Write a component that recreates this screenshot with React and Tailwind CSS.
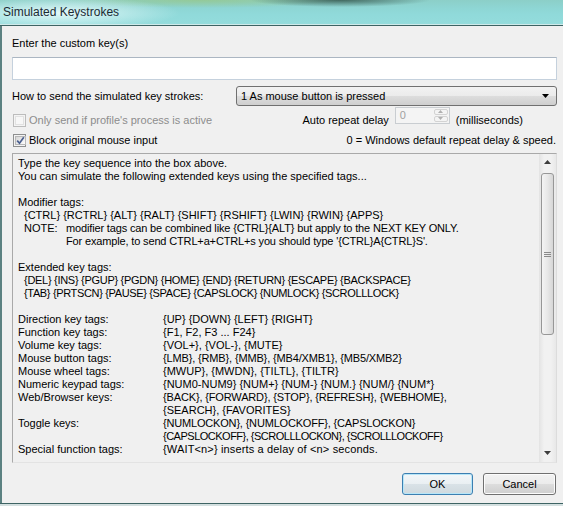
import React from "react";

const Check = ({ checked, disabled }) => (
  <span
    className={`w-[13px] h-[13px] shrink-0 border p-px flex ${
      disabled ? "border-[#bcbcbc] bg-[#f4f4f4]" : "border-[#8e8f8f] bg-[#f4f4f4]"
    }`}
  >
    <span
      className={`flex-1 flex items-center justify-center border ${
        disabled
          ? "border-[#e1e1e1] bg-[#f7f7f7]"
          : "border-[#b8b8b8] bg-[linear-gradient(135deg,#d6d6d6,#fdfdfd)]"
      }`}
    >
      {checked && (
        <svg width="9" height="9" viewBox="0 0 9 9" className="-mt-px">
          <path d="M1.2 4.6 L3.5 7.2 L7.8 1.2" stroke="#4a5f8f" strokeWidth="1.7" fill="none" />
        </svg>
      )}
    </span>
  </span>
);

const Triangle = ({ dir = "down", color = "#000", w = 7 }) => (
  <svg width={w} height={Math.ceil(w / 2) + 1} viewBox={`0 0 ${w} ${Math.ceil(w / 2) + 1}`}>
    {dir === "down" ? (
      <path d={`M0 0 L${w} 0 L${w / 2} ${Math.ceil(w / 2)} Z`} fill={color} />
    ) : (
      <path d={`M${w / 2} 0 L${w} ${Math.ceil(w / 2)} L0 ${Math.ceil(w / 2)} Z`} fill={color} />
    )}
  </svg>
);

// [label, value, tracking class for the value]
const tagRows = [
  ["Direction key tags:", "{UP} {DOWN} {LEFT} {RIGHT}", ""],
  ["Function key tags:", "{F1, F2, F3 ... F24}", ""],
  ["Volume key tags:", "{VOL+}, {VOL-}, {MUTE}", ""],
  ["Mouse button tags:", "{LMB}, {RMB}, {MMB}, {MB4/XMB1}, {MB5/XMB2}", "tracking-[-0.15px]"],
  ["Mouse wheel tags:", "{MWUP}, {MWDN}, {TILTL}, {TILTR}", ""],
  ["Numeric keypad tags:", "{NUM0-NUM9} {NUM+} {NUM-} {NUM.} {NUM/} {NUM*}", ""],
  ["Web/Browser keys:", "{BACK}, {FORWARD}, {STOP}, {REFRESH}, {WEBHOME},", "tracking-[-0.15px]"],
  ["", "{SEARCH}, {FAVORITES}", ""],
  ["Toggle keys:", "{NUMLOCKON}, {NUMLOCKOFF}, {CAPSLOCKON}", "tracking-[-0.18px]"],
  ["", "{CAPSLOCKOFF}, {SCROLLLOCKON}, {SCROLLLOCKOFF}", "tracking-[-0.5px]"],
  ["Special function tags:", "{WAIT<n>} inserts a delay of <n> seconds.", "tracking-[0.15px]"],
];

export default function App() {
  return (
    <div className="w-[563px] h-[506px] overflow-hidden flex flex-col bg-[#d3e3e3] font-['Liberation_Sans',Arial,sans-serif] text-[11px] leading-[13px] text-black">
      {/* title bar */}
      <div className="h-[24px] shrink-0 flex items-center pl-[3px] text-[12px] text-[#1c2a33] bg-[radial-gradient(ellipse_120px_16px_at_60px_13px,rgba(232,250,250,0.95),rgba(232,250,250,0)),radial-gradient(ellipse_90px_7px_at_340px_0px,rgba(40,70,60,0.75),rgba(40,70,60,0)),radial-gradient(ellipse_140px_8px_at_200px_0px,rgba(150,200,140,0.8),rgba(150,200,140,0)),linear-gradient(180deg,#8ccfc8_0%,#8ed6d4_35%,#90dada_60%,#94dcdc_100%)]">
        Simulated Keystrokes
      </div>
      <div className="h-px shrink-0 bg-[#cfeaea]" />
      <div className="h-px shrink-0 bg-[#3e6464]" />

      {/* client */}
      <div className="flex-1 flex flex-col border-l-2 border-[#5b8181] bg-[#f0f0f0] pl-[10px] pr-[6px] pt-[11px]">
        <div>Enter the custom key(s)</div>
        <div className="mt-[7px] h-[23px] bg-white border border-[#c5d1dd] border-t-[#abb6c2]" />

        <div className="mt-[6px] h-[20px] flex items-center">
          <span>How to send the simulated key strokes:</span>
          <div className="ml-auto w-[321px] h-[20px] flex items-center border border-[#707070] rounded-[3px] bg-[linear-gradient(#f2f2f2,#ebebeb_50%,#dddddd_50%,#cfcfcf)] pl-[4px] pr-[7px]">
            <span>1 As mouse button is pressed</span>
            <span className="ml-auto flex">
              <Triangle />
            </span>
          </div>
        </div>

        <div className="mt-px h-[20px] flex items-start">
          <div className="pt-[7px] pl-px flex items-center gap-[3px] text-[#8d8d8d]">
            <Check disabled />
            <span>Only send if profile's process is active</span>
          </div>
          <div className="ml-auto mr-[34px] flex items-start">
            <span className="pt-[7px]">Auto repeat delay</span>
            <div className="ml-[6px] w-[55px] h-[17px] flex border border-[#c9cdd1] bg-[#f4f4f4]">
              <span className="flex-1 pl-[4px] leading-[15px] text-[#a0a0a0]">0</span>
              <div className="w-[16px] flex flex-col gap-px p-px">
                <div className="flex-1 flex items-center justify-center border border-[#d3d3d3] rounded-[2px] bg-[#f4f4f4]">
                  <Triangle dir="up" color="#b0b0b0" w={5} />
                </div>
                <div className="flex-1 flex items-center justify-center border border-[#d3d3d3] rounded-[2px] bg-[#f4f4f4]">
                  <Triangle color="#b0b0b0" w={5} />
                </div>
              </div>
            </div>
            <span className="pt-[7px] ml-[6px]">(milliseconds)</span>
          </div>
        </div>

        <div className="mt-[7px] h-[13px] flex items-center">
          <div className="pl-px flex items-center gap-[3px]">
            <Check checked />
            <span>Block original mouse input</span>
          </div>
          <span className="ml-auto mr-px">0 = Windows default repeat delay &amp; speed.</span>
        </div>

        {/* help text box */}
        <div className="mt-[6px] h-[310px] flex border border-[#a9a9a9] border-r-[#dcdcdc] border-b-[#e3e3e3]">
          <div className="flex-1 pl-[5px] pt-[3px] whitespace-pre">
            <div>Type the key sequence into the box above.</div>
            <div>You can simulate the following extended keys using the specified tags...</div>
            <div>&nbsp;</div>
            <div>Modifier tags:</div>
            <div className="pl-[6px]">{"{CTRL} {RCTRL} {ALT} {RALT} {SHIFT} {RSHIFT} {LWIN} {RWIN} {APPS}"}</div>
            <div className="pl-[6px] grid grid-cols-[42px_1fr]">
              <span>NOTE:</span>
              <span className="tracking-[-0.15px]">{"modifier tags can be combined like {CTRL}{ALT} but apply to the NEXT KEY ONLY."}</span>
              <span />
              <span className="tracking-[-0.15px]">{"For example, to send CTRL+a+CTRL+s you should type '{CTRL}A{CTRL}S'."}</span>
            </div>
            <div>&nbsp;</div>
            <div>Extended key tags:</div>
            <div className="pl-[6px] tracking-[-0.29px]">{"{DEL} {INS} {PGUP} {PGDN} {HOME} {END} {RETURN} {ESCAPE} {BACKSPACE}"}</div>
            <div className="pl-[6px] tracking-[-0.35px]">{"{TAB} {PRTSCN} {PAUSE} {SPACE} {CAPSLOCK} {NUMLOCK} {SCROLLLOCK}"}</div>
            <div>&nbsp;</div>
            <div className="grid grid-cols-[145px_1fr]">
              {tagRows.map(([label, value, tr], i) => (
                <React.Fragment key={i}>
                  <span>{label}</span>
                  <span className={tr}>{value}</span>
                </React.Fragment>
              ))}
            </div>
          </div>

          {/* scrollbar */}
          <div className="w-[17px] flex flex-col bg-[linear-gradient(90deg,#e3e3e3,#f1f1f1_30%,#f1f1f1_70%,#e8e8e8)]">
            <div className="h-[17px] flex items-center justify-center">
              <Triangle dir="up" color="#3d3d3d" />
            </div>
            <div className="mx-[2px] mt-[2px] h-[162px] rounded-[3px] border border-[#979797] bg-[linear-gradient(90deg,#f4f4f4,#e8e8e8_50%,#d6d6d6)] flex items-center justify-center">
              <div className="flex flex-col gap-px">
                <div className="w-[7px] h-px bg-[#8a8a8a]" />
                <div className="w-[7px] h-px bg-[#8a8a8a]" />
                <div className="w-[7px] h-px bg-[#8a8a8a]" />
              </div>
            </div>
            <div className="mt-auto h-[17px] flex items-center justify-center">
              <Triangle color="#3d3d3d" />
            </div>
          </div>
        </div>

        {/* buttons */}
        <div className="mt-[10px] flex justify-end gap-[10px] mr-px">
          <button className="w-[71px] h-[22px] rounded-[3px] border border-[#3c7fb1] shadow-[inset_0_0_0_1px_#b7e6f8] bg-[linear-gradient(#f3f7f9,#e9eff2_50%,#d9e2e7_50%,#cfd9de)]">
            OK
          </button>
          <button className="w-[73px] h-[22px] rounded-[3px] border border-[#707070] shadow-[inset_0_0_0_1px_#fcfcfc] bg-[linear-gradient(#f2f2f2,#ebebeb_50%,#dddddd_50%,#cfcfcf)]">
            Cancel
          </button>
        </div>
      </div>

      <div className="h-px shrink-0 bg-[#3e6464]" />
      <div className="h-[2px] shrink-0 bg-[#d4e0e0]" />
    </div>
  );
}
